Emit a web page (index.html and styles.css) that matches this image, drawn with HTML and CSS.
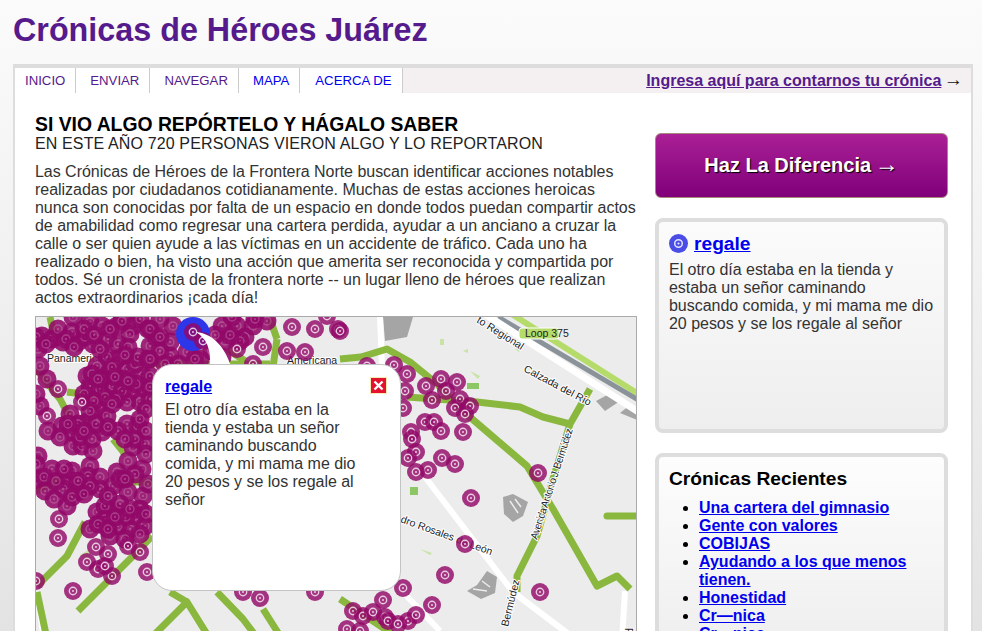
FILE: index.html
```html
<!DOCTYPE html>
<html lang="es">
<head>
    <meta charset="UTF-8">
    <title>Crónicas de Héroes Juárez</title>
    <link rel="stylesheet" href="styles.css">
</head>
<body>
<h1 class="site-title">Crónicas de Héroes Juárez</h1>
<div class="wrapper">
    <div class="nav">
        <ul class="tabs">
            <li><a href="#" class="visited">INICIO</a></li>
            <li><a href="#" class="visited">ENVIAR</a></li>
            <li><a href="#" class="visited">NAVEGAR</a></li>
            <li><a href="#">MAPA</a></li>
            <li><a href="#">ACERCA DE</a></li>
        </ul>
        <p class="nav-cta"><a href="#">Ingresa aquí para contarnos tu crónica</a> <span class="arrow">→</span></p>
    </div>
    <div class="content">
        <div class="main">
            <h2 class="headline">SI VIO ALGO REPÓRTELO Y HÁGALO SABER</h2>
            <h3 class="subhead">EN ESTE AÑO 720 PERSONAS VIERON ALGO Y LO REPORTARON</h3>
            <p class="intro">Las Crónicas de Héroes de la Frontera Norte buscan identificar acciones notables realizadas por ciudadanos cotidianamente. Muchas de estas acciones heroicas nunca son conocidas por falta de un espacio en donde todos puedan compartir actos de amabilidad como regresar una cartera perdida, ayudar a un anciano a cruzar la calle o ser quien ayude a las víctimas en un accidente de tráfico. Cada uno ha realizado o bien, ha visto una acción que amerita ser reconocida y compartida por todos. Sé un cronista de la frontera norte -- un lugar lleno de héroes que realizan actos extraordinarios ¡cada día!</p>
            <div class="map">
                <svg class="map-svg" width="600" height="400" viewBox="36 318 600 400">
                    <defs>
                        <g id="pin">
                            <circle r="9" fill="#920868" fill-opacity=".82"/>
                            <circle r="3.7" fill="none" stroke="#fff" stroke-opacity=".75" stroke-width="1.4"/>
                            <circle r="1" fill="#fff" fill-opacity=".75"/>
                        </g>
                        <g id="dense">
                            <circle r="9.5" fill="#920868" fill-opacity=".88"/>
                            <circle r="4" fill="none" stroke="#fff" stroke-opacity=".22" stroke-width="1.3"/>
                            <circle r="1" fill="#fff" fill-opacity=".25"/>
                        </g>
                    </defs>
                    <rect x="36" y="318" width="600" height="400" fill="#ececec"/>
                    <!-- bloques grises -->
                    <g fill="#a5a5a5">
                        <path d="M383,318h30l-6,20l-22,4z"/>
                        <path d="M596,402l15,-8l9,8l-15,10z"/>
                        <path d="M620,414l10,-8l7,5v10z"/>
                        <path d="M503,498l10,-3l15,8l-5,14l-10,6l-9,-8z"/>
                        <path d="M467,592l10,-6l10,-14l10,6l-2,16l-14,6z"/>
                    </g>
                    <path d="M510,502l8,12M515,500l6,8M473,590l14,2M482,582l8,6" stroke="#ececec" stroke-width="1.5" fill="none"/>
                    <!-- parques -->
                    <g fill="#c9e3a4">
                        <path d="M440,340h4v6h-4z"/>
                        <path d="M463,352l5,-2v4z"/>
                        <path d="M470,372l10,5l-2,3z"/>
                        <path d="M467,384h12v6h-12z" fill="#8cc665"/>
                        <path d="M410,488h8v8h-8z" fill="#8cc665"/>
                        <path d="M420,550l12,4l-2,2z"/>
                        <path d="M515,350l8,-2l-4,5z"/>
                        <path d="M80,556l10,-6v14z"/>
                    </g>
                    <!-- autopista arriba -->
                    <path d="M510,314L640,396" stroke="#b5dc6a" stroke-width="6" fill="none"/>
                    <path d="M498,318L640,402" stroke="#8a929a" stroke-width="5" fill="none"/>
                    <path d="M480,312L640,414" stroke="#fff" stroke-width="7" fill="none"/>
                    <!-- calles blancas -->
                    <g stroke="#fff" stroke-width="6" fill="none">
                        <path d="M380,318l2,50"/>
                        <path d="M425,478L513,593L575,640"/>
                        <path d="M37,593L44,640"/>
                        <path d="M625,592l-3,50"/>
                        <path d="M400,590l40,42"/>
                    </g>
                    <!-- avenidas verdes -->
                    <g stroke="#8ab73e" stroke-width="7" fill="none" stroke-linejoin="round">
                        <path d="M340,360L361,358L387,350L410,363L437,385L457,407L527,467L553,510L597,587L617,577L630,590"/>
                        <path d="M407,398L477,403L520,408L543,418L570,425"/>
                        <path d="M590,390L570,425L553,480L537,537L517,577L517,593"/>
                        <path d="M607,517H637" stroke-linecap="round"/>
                        <path d="M50,318L53,332L60,345"/>
                        <path d="M36,370L60,400L73,425"/>
                        <path d="M67,393L120,400"/>
                        <path d="M150,365H270"/>
                        <path d="M277,340L273,368M270,320L277,340"/>
                        <path d="M227,350L245,362"/>
                        <path d="M113,440L125,455"/>
                        <path d="M123,483H152"/>
                        <path d="M37,587L67,557L85,523"/>
                        <path d="M36,492L60,480"/>
                        <path d="M78,612L90,600L133,557L152,537"/>
                        <path d="M150,640L187,603L210,640"/>
                        <path d="M170,593L187,603"/>
                        <path d="M217,593L243,620L258,640"/>
                        <path d="M263,610L282,640"/>
                        <path d="M37,593L47,640"/>
                        <path d="M340,600L400,640"/>
                    </g>
                    <!-- etiquetas -->
                    <g class="map-label">
                        <text transform="translate(476,323) rotate(32)">to Regional</text>
                        <text transform="translate(523,372) rotate(28)">Calzada del Río</text>
                        <text transform="translate(537,541) rotate(-72)" textLength="116">Avenida Antonio J. Bermúdez</text>
                        <text transform="translate(400,523) rotate(20)">dro Rosales de León</text>
                        <text transform="translate(508,628) rotate(-76)">Bermúdez</text>
                        <text transform="translate(625,629) rotate(90)">Fr</text>
                        <text x="287" y="365">Americana</text>
                        <text x="47" y="363">Panamericana</text>
                    </g>
                    <rect x="519" y="329" width="40" height="11" rx="3" fill="#b5dc6a" stroke="#fff"/>
                    <text class="map-badge" x="525" y="338">Loop 375</text>
                    <!-- pines densos -->
                    <g>
                        <use href="#dense" x="73" y="318"/><use href="#dense" x="90" y="323"/><use href="#dense" x="102" y="327"/><use href="#dense" x="117" y="327"/><use href="#dense" x="133" y="327"/><use href="#dense" x="160" y="320"/><use href="#dense" x="173" y="327"/>
                        <use href="#dense" x="222" y="327"/><use href="#dense" x="237" y="327"/><use href="#dense" x="253" y="327"/><use href="#dense" x="267" y="322"/>
                        <use href="#dense" x="225" y="342"/><use href="#dense" x="245" y="338"/>
                        <use href="#dense" x="150" y="347"/><use href="#dense" x="130" y="335"/><use href="#dense" x="170" y="343"/><use href="#dense" x="170" y="357"/><use href="#dense" x="200" y="360"/><use href="#dense" x="187" y="353"/><use href="#dense" x="160" y="352"/><use href="#dense" x="178" y="365"/>
                        <use href="#dense" x="42" y="337"/><use href="#dense" x="52" y="340"/><use href="#dense" x="63" y="343"/><use href="#dense" x="78" y="343"/><use href="#dense" x="93" y="345"/><use href="#dense" x="40" y="367"/><use href="#dense" x="85" y="338"/><use href="#dense" x="108" y="340"/><use href="#dense" x="72" y="333"/><use href="#dense" x="38" y="350"/><use href="#dense" x="118" y="345"/>
                        <use href="#dense" x="47" y="380"/><use href="#dense" x="40" y="407"/><use href="#dense" x="36" y="395"/>
                        <use href="#dense" x="90" y="387"/><use href="#dense" x="100" y="390"/><use href="#dense" x="113" y="387"/><use href="#dense" x="127" y="370"/><use href="#dense" x="117" y="360"/><use href="#dense" x="107" y="358"/><use href="#dense" x="97" y="367"/><use href="#dense" x="87" y="377"/><use href="#dense" x="123" y="380"/><use href="#dense" x="130" y="393"/><use href="#dense" x="143" y="377"/><use href="#dense" x="150" y="377"/><use href="#dense" x="140" y="403"/><use href="#dense" x="127" y="403"/><use href="#dense" x="145" y="390"/><use href="#dense" x="135" y="365"/><use href="#dense" x="108" y="375"/><use href="#dense" x="150" y="400"/>
                        <use href="#dense" x="98" y="410"/><use href="#dense" x="107" y="417"/><use href="#dense" x="127" y="425"/><use href="#dense" x="138" y="427"/><use href="#dense" x="118" y="432"/><use href="#dense" x="62" y="427"/><use href="#dense" x="48" y="432"/><use href="#dense" x="72" y="433"/><use href="#dense" x="87" y="423"/><use href="#dense" x="102" y="433"/><use href="#dense" x="73" y="447"/><use href="#dense" x="82" y="447"/><use href="#dense" x="93" y="452"/><use href="#dense" x="90" y="467"/><use href="#dense" x="133" y="448"/><use href="#dense" x="145" y="445"/><use href="#dense" x="128" y="462"/><use href="#dense" x="142" y="470"/><use href="#dense" x="117" y="473"/><use href="#dense" x="38" y="457"/><use href="#dense" x="52" y="470"/><use href="#dense" x="37" y="480"/><use href="#dense" x="45" y="492"/>
                        <use href="#dense" x="68" y="480"/><use href="#dense" x="63" y="490"/><use href="#dense" x="80" y="492"/><use href="#dense" x="67" y="507"/><use href="#dense" x="88" y="477"/><use href="#dense" x="100" y="478"/><use href="#dense" x="113" y="487"/><use href="#dense" x="100" y="490"/><use href="#dense" x="128" y="493"/><use href="#dense" x="143" y="497"/><use href="#dense" x="140" y="510"/><use href="#dense" x="145" y="527"/><use href="#dense" x="130" y="530"/><use href="#dense" x="118" y="527"/><use href="#dense" x="110" y="537"/><use href="#dense" x="90" y="530"/><use href="#dense" x="97" y="513"/><use href="#dense" x="113" y="512"/><use href="#dense" x="135" y="517"/><use href="#dense" x="105" y="507"/>
                        <use href="#dense" x="58" y="330"/><use href="#dense" x="66" y="340"/><use href="#dense" x="74" y="348"/><use href="#dense" x="84" y="330"/><use href="#dense" x="94" y="336"/><use href="#dense" x="100" y="350"/><use href="#dense" x="110" y="330"/><use href="#dense" x="122" y="322"/><use href="#dense" x="140" y="320"/><use href="#dense" x="148" y="330"/><use href="#dense" x="156" y="338"/><use href="#dense" x="128" y="348"/><use href="#dense" x="36" y="338"/><use href="#dense" x="46" y="345"/>
                        <use href="#dense" x="84" y="395"/><use href="#dense" x="92" y="375"/><use href="#dense" x="102" y="380"/><use href="#dense" x="112" y="368"/><use href="#dense" x="122" y="392"/><use href="#dense" x="136" y="385"/><use href="#dense" x="116" y="400"/><use href="#dense" x="105" y="398"/><use href="#dense" x="94" y="402"/><use href="#dense" x="150" y="388"/><use href="#dense" x="138" y="358"/><use href="#dense" x="125" y="356"/><use href="#dense" x="98" y="380"/><use href="#dense" x="115" y="378"/><use href="#dense" x="128" y="382"/>
                        <use href="#dense" x="70" y="415"/><use href="#dense" x="78" y="425"/><use href="#dense" x="90" y="412"/><use href="#dense" x="96" y="425"/><use href="#dense" x="108" y="428"/><use href="#dense" x="80" y="438"/><use href="#dense" x="92" y="440"/><use href="#dense" x="60" y="438"/><use href="#dense" x="112" y="405"/><use href="#dense" x="84" y="432"/><use href="#dense" x="68" y="425"/>
                        <use href="#dense" x="44" y="478"/><use href="#dense" x="56" y="482"/><use href="#dense" x="72" y="472"/><use href="#dense" x="78" y="482"/><use href="#dense" x="90" y="487"/><use href="#dense" x="72" y="498"/><use href="#dense" x="54" y="500"/><use href="#dense" x="108" y="497"/><use href="#dense" x="120" y="480"/><use href="#dense" x="64" y="470"/><use href="#dense" x="84" y="495"/><use href="#dense" x="36" y="465"/>
                        <use href="#dense" x="105" y="520"/><use href="#dense" x="120" y="505"/><use href="#dense" x="126" y="518"/><use href="#dense" x="98" y="525"/><use href="#dense" x="108" y="530"/><use href="#dense" x="140" y="535"/><use href="#dense" x="130" y="510"/><use href="#dense" x="125" y="540"/><use href="#dense" x="115" y="518"/>
                        <use href="#dense" x="146" y="410"/><use href="#dense" x="140" y="420"/><use href="#dense" x="146" y="432"/><use href="#dense" x="135" y="440"/><use href="#dense" x="125" y="440"/><use href="#dense" x="146" y="455"/><use href="#dense" x="135" y="475"/><use href="#dense" x="125" y="480"/><use href="#dense" x="148" y="485"/><use href="#dense" x="146" y="515"/><use href="#dense" x="148" y="360"/>
                        <use href="#dense" x="150" y="330"/><use href="#dense" x="160" y="338"/><use href="#dense" x="215" y="336"/><use href="#dense" x="232" y="318"/><use href="#dense" x="240" y="342"/><use href="#dense" x="255" y="320"/><use href="#dense" x="212" y="352"/><use href="#dense" x="222" y="358"/><use href="#dense" x="150" y="360"/><use href="#dense" x="165" y="365"/><use href="#dense" x="195" y="360"/><use href="#dense" x="230" y="336"/>
                    </g>
                    <!-- pines sueltos -->
                    <g>
                        <use href="#pin" x="292" y="328"/><use href="#pin" x="315" y="330"/><use href="#pin" x="338" y="330"/><use href="#pin" x="327" y="317"/>
                        <use href="#pin" x="237" y="350"/><use href="#pin" x="263" y="348"/><use href="#pin" x="287" y="352"/><use href="#pin" x="305" y="353"/><use href="#pin" x="253" y="365"/>
                        <use href="#pin" x="58" y="390"/><use href="#pin" x="82" y="403"/><use href="#pin" x="47" y="417"/>
                        <use href="#pin" x="59" y="520"/><use href="#pin" x="58" y="539"/><use href="#pin" x="96" y="548"/><use href="#pin" x="108" y="555"/><use href="#pin" x="128" y="547"/><use href="#pin" x="140" y="553"/><use href="#pin" x="87" y="563"/><use href="#pin" x="98" y="570"/><use href="#pin" x="112" y="577"/><use href="#pin" x="105" y="567"/><use href="#pin" x="73" y="592"/><use href="#pin" x="147" y="573"/><use href="#pin" x="36" y="582"/>
                        <use href="#pin" x="260" y="599"/><use href="#pin" x="243" y="593"/><use href="#pin" x="315" y="593"/>
                        <use href="#pin" x="340" y="332"/><use href="#pin" x="367" y="367"/><use href="#pin" x="394" y="366"/><use href="#pin" x="407" y="375"/><use href="#pin" x="426" y="387"/><use href="#pin" x="441" y="380"/><use href="#pin" x="457" y="383"/><use href="#pin" x="446" y="392"/><use href="#pin" x="432" y="401"/><use href="#pin" x="460" y="400"/><use href="#pin" x="455" y="409"/><use href="#pin" x="470" y="407"/><use href="#pin" x="465" y="415"/><use href="#pin" x="403" y="409"/><use href="#pin" x="405" y="392"/><use href="#pin" x="425" y="423"/><use href="#pin" x="434" y="423"/><use href="#pin" x="441" y="432"/><use href="#pin" x="463" y="433"/><use href="#pin" x="411" y="433"/><use href="#pin" x="412" y="440"/><use href="#pin" x="416" y="453"/><use href="#pin" x="408" y="459"/><use href="#pin" x="442" y="459"/><use href="#pin" x="455" y="465"/><use href="#pin" x="428" y="471"/><use href="#pin" x="416" y="473"/>
                        <use href="#pin" x="538" y="474"/><use href="#pin" x="471" y="499"/><use href="#pin" x="465" y="545"/><use href="#pin" x="445" y="576"/><use href="#pin" x="540" y="593"/><use href="#pin" x="403" y="589"/><use href="#pin" x="383" y="601"/><use href="#pin" x="432" y="606"/><use href="#pin" x="353" y="612"/><use href="#pin" x="363" y="617"/><use href="#pin" x="373" y="613"/><use href="#pin" x="385" y="618"/><use href="#pin" x="388" y="622"/><use href="#pin" x="408" y="622"/><use href="#pin" x="416" y="616"/><use href="#pin" x="398" y="625"/><use href="#pin" x="347" y="630"/><use href="#pin" x="360" y="632"/>
                    </g>
                    <!-- seleccion -->
                    <circle cx="193" cy="335" r="17" fill="#2d36e8"/>
                    <use href="#pin" x="193" y="333"/><use href="#pin" x="203" y="342"/>
                    <path d="M196,333C215,335 225,350 231,367H210C211,350 207,340 196,333z" fill="#fff"/>
                </svg>
                <div class="popup">
                    <a class="popup-close" href="#" aria-label="cerrar">
                        <svg width="15" height="15" viewBox="0 0 15 15">
                            <rect width="15" height="15" fill="#e3122f"/>
                            <path d="M3.5,3.5L11.5,11.5M11.5,3.5L3.5,11.5" stroke="#fff" stroke-width="2.4"/>
                        </svg>
                    </a>
                    <a class="popup-title" href="#">regale</a>
                    <p class="popup-text">El otro día estaba en la tienda y estaba un señor caminando buscando comida, y mi mama me dio 20 pesos y se los regale al señor</p>
                </div>
            </div>
        </div>
        <div class="sidebar">
            <a class="cta-button" href="#">Haz La Diferencia <span class="arrow">→</span></a>
            <div class="box box-story">
                <h3 class="story-title">
                    <svg class="story-icon" width="19" height="19" viewBox="0 0 19 19">
                        <circle cx="9.5" cy="9.5" r="9.5" fill="#4a4de6"/>
                        <circle cx="9.5" cy="9.5" r="3.8" fill="none" stroke="#fff" stroke-opacity=".85" stroke-width="1.5"/>
                        <circle cx="9.5" cy="9.5" r="1.1" fill="#fff" fill-opacity=".85"/>
                    </svg>
                    <a href="#">regale</a>
                </h3>
                <p class="story-text">El otro día estaba en la tienda y estaba un señor caminando buscando comida, y mi mama me dio 20 pesos y se los regale al señor</p>
            </div>
            <div class="box">
                <h3 class="box-title">Crónicas Recientes</h3>
                <ul class="recent">
                    <li><a href="#">Una cartera del gimnasio</a></li>
                    <li><a href="#">Gente con valores</a></li>
                    <li><a href="#">COBIJAS</a></li>
                    <li><a href="#">Ayudando a los que menos tienen.</a></li>
                    <li><a href="#">Honestidad</a></li>
                    <li><a href="#">Cr—nica</a></li>
                    <li><a href="#">Cr—nica</a></li>
                </ul>
            </div>
        </div>
    </div>
</div>
</body>
</html>
```

FILE: styles.css
```css
* {
    margin: 0;
    padding: 0;
    box-sizing: border-box;
}
body {
    font-family: "Liberation Sans", Arial, sans-serif;
    color: #333;
    background: linear-gradient(#fbfbfb, #dedede);
    min-height: 760px;
}
a {
    color: #00e;
}
.arrow {
    margin-left: -2px;
    font-size: 1.2em;
    line-height: 1;
}
.site-title {
    padding: 12px 0 0 13px;
    height: 64px;
    font-size: 32.3px;
    line-height: 37px;
    color: #551a8b;
}
.wrapper {
    width: 960px;
    margin-left: 13px;
    border: 2px solid #ddd;
    border-top-width: 4px;
    background: #fff;
}
.nav {
    display: flex;
    justify-content: space-between;
    align-items: center;
    height: 25px;
    background: #f4f0f2;
}
.tabs {
    display: flex;
    list-style: none;
    height: 25px;
}
.tabs li {
    background: #fff;
    border-right: 1px solid #ccc;
}
.tabs a {
    display: block;
    padding: 0 10px 0 14px;
    font-size: 13.2px;
    line-height: 25px;
    text-decoration: none;
}
.tabs li:first-child a {
    padding-left: 10px;
}
.tabs li:last-child a {
    padding-left: 15px;
}
.tabs a.visited {
    color: #551a8b;
}
.nav-cta {
    padding-right: 8px;
    font-size: 16px;
    line-height: 25px;
    color: #111;
}
.nav-cta a {
    font-weight: bold;
    color: #551a8b;
}
.content {
    display: flex;
    gap: 18px;
    padding: 21px 23px 20px 20px;
}
.main {
    width: 602px;
}
.headline {
    font-size: 19.35px;
    line-height: 21px;
    color: #000;
}
.subhead {
    font-size: 16px;
    font-weight: normal;
    line-height: 18px;
    letter-spacing: .13px;
    color: #222;
}
.intro {
    margin-top: 10px;
    font-size: 16px;
    line-height: 18px;
    letter-spacing: -.03px;
}
.map {
    position: relative;
    width: 602px;
    height: 402px;
    margin-top: 9px;
    border: 1px solid #aaa;
}
.map-svg {
    display: block;
}
.map-label {
    font-size: 10.5px;
    fill: #222;
    paint-order: stroke;
    stroke: #fff;
    stroke-width: 2px;
}
.map-badge {
    font-size: 10.5px;
    fill: #222;
}
.popup {
    position: absolute;
    left: 116px;
    top: 47px;
    width: 249px;
    height: 227px;
    padding: 13px 12px;
    background: #fff;
    border: 1px solid #c4c4c4;
    border-radius: 20px;
}
.popup-close {
    position: absolute;
    left: 218px;
    top: 13px;
    line-height: 0;
    outline: 1px solid #f5e9b5;
}
.popup-title {
    font-size: 16px;
    font-weight: bold;
    line-height: 18px;
}
.popup-text {
    max-width: 195px;
    margin-top: 5px;
    font-size: 16px;
    line-height: 18px;
    letter-spacing: -.03px;
}
.sidebar {
    width: 293px;
    padding-top: 19px;
}
.cta-button {
    display: block;
    height: 65px;
    font-size: 20px;
    font-weight: bold;
    line-height: 62px;
    text-align: center;
    text-decoration: none;
    color: #fff;
    text-shadow: 1px 1px 1px #000;
    background: linear-gradient(#aa2095, #80007a);
    border: 1px solid #a58a7c;
    border-radius: 6px;
}
.box {
    margin-top: 20px;
    padding: 10px;
    border: 4px solid #ddd;
    border-radius: 8px;
    background: linear-gradient(#fdfdfd, #eee);
}
.box-story {
    height: 215px;
    background: linear-gradient(#fbfbfb, #eee);
}
.story-title {
    display: flex;
    align-items: center;
    gap: 6px;
    font-size: 19.2px;
    line-height: 23px;
}
.story-text {
    margin-top: 6px;
    font-size: 16px;
    line-height: 18px;
    letter-spacing: -.03px;
}
.box-title {
    font-size: 19.2px;
    line-height: 23px;
    color: #000;
}
.recent {
    margin-top: 9px;
    padding-left: 30px;
    font-size: 16px;
    font-weight: bold;
    line-height: 18px;
    color: #000;
}
```
